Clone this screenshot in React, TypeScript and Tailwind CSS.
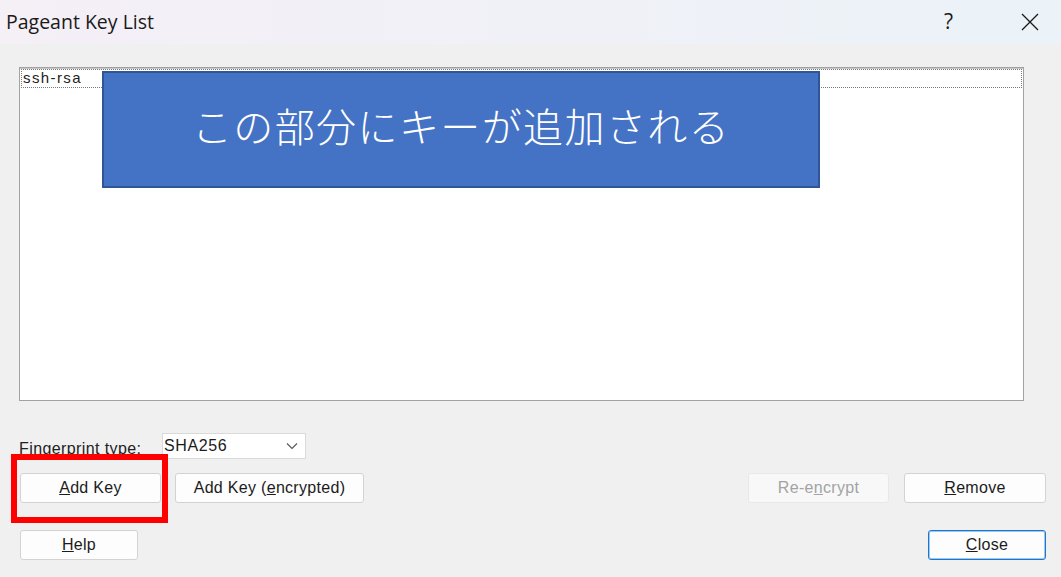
import React from "react"

const ui = { fontFamily: '"Liberation Sans", Arial, sans-serif' }

function Btn({
  children,
  className = "",
  disabled = false,
  primary = false,
}: {
  children: React.ReactNode
  className?: string
  disabled?: boolean
  primary?: boolean
}) {
  return (
    <button
      style={ui}
      className={
        "flex h-[30px] items-center justify-center rounded-[3px] border text-[16px] tracking-[0.3px] " +
        (disabled
          ? "border-[#e8e8e8] bg-[#f8f8f8] text-[#a3a3a3] "
          : primary
          ? "border-[#1a78d0] bg-[#fdfdfd] text-[#1b1b1b] shadow-[inset_0_0_0_1px_#9ec7ee] "
          : "border-[#d3d3d3] bg-[#fdfdfd] text-[#1b1b1b] ") +
        className
      }
    >
      {children}
    </button>
  )
}

export default function App() {
  return (
    <div className="relative h-[577px] w-[1061px] overflow-hidden bg-[#f0f0f0]">
      {/* Title bar */}
      <div className="flex h-[44px] items-center bg-gradient-to-r from-[#f5eff6] to-[#ebf3f8] pl-[6px]">
        <span
          className="text-[19.5px] text-[#1a1a1a]"
          style={{ fontFamily: '"Open Sans", "Noto Sans", sans-serif' }}
        >
          Pageant Key List
        </span>
        <span
          className="ml-auto mr-[68px] text-[21px] text-[#1a1a1a]"
          style={{ fontFamily: '"Open Sans", "Noto Sans", sans-serif' }}
        >
          ?
        </span>
        <svg width="18" height="18" viewBox="0 0 18 18" className="mr-[22px]">
          <path d="M1 1 L17 17 M17 1 L1 17" stroke="#1a1a1a" strokeWidth="1.3" />
        </svg>
      </div>

      <div className="px-[19px]">
        {/* Key list */}
        <div className="relative mt-[23px] h-[334px] w-[1005px] border border-[#a2a2a2] bg-white shadow-[inset_0_1px_0_#c8c8c8]">
          <div className="mx-[1px] mt-[1px] flex h-[19px] items-center border border-dotted border-[#7a7a7a]">
            <span style={ui} className="pl-[1px] text-[15px] tracking-[1.4px] text-[#222]">
              ssh-rsa
            </span>
          </div>
          <div className="absolute left-[82px] top-[3px] flex h-[117px] w-[718px] items-center justify-center border-2 border-[#2f5597] bg-[#4472c4] pb-[9px]">
            <span
              className="text-[40px] font-light tracking-[1.4px] text-white"
              style={{ fontFamily: '"Noto Sans CJK JP", "Noto Sans", sans-serif' }}
            >
              この部分にキーが追加される
            </span>
          </div>
        </div>

        {/* Fingerprint row */}
        <div className="mt-[32px] flex h-[26px] items-end">
          <span style={ui} className="w-[143px] text-[16px] leading-[20px] tracking-[0.4px] text-[#222]">
            Fingerprint type:
          </span>
          <div className="flex h-[26px] w-[144px] items-center border border-[#dadada] bg-white pl-[1px]">
            <span style={ui} className="text-[16px] tracking-[0.6px] text-[#1b1b1b]">
              SHA256
            </span>
            <svg width="12" height="8" viewBox="0 0 12 8" className="ml-auto mr-[7px]">
              <path d="M1 1.5 L6 6.5 L11 1.5" fill="none" stroke="#555" strokeWidth="1.1" />
            </svg>
          </div>
        </div>

        {/* Key buttons */}
        <div className="mt-[14px] flex items-center">
          <Btn className="ml-[1px] w-[141px]">
            <span><u>A</u>dd Key</span>
          </Btn>
          <Btn className="ml-[14px] w-[189px]">
            <span>Add Key (<u>e</u>ncrypted)</span>
          </Btn>
          <Btn disabled className="ml-auto w-[141px]">
            <span>Re-e<u>n</u>crypt</span>
          </Btn>
          <Btn className="ml-[15px] mr-[-4px] w-[142px]">
            <span><u>R</u>emove</span>
          </Btn>
        </div>

        {/* Bottom buttons */}
        <div className="mt-[27px] flex items-center">
          <Btn className="ml-[1px] w-[118px]">
            <span><u>H</u>elp</span>
          </Btn>
          <Btn primary className="ml-auto mr-[-4px] w-[118px]">
            <span><u>C</u>lose</span>
          </Btn>
        </div>
      </div>

      {/* Red annotation box */}
      <div className="absolute left-[11px] top-[454px] h-[69px] w-[157px] border-[6px] border-[#ff0000]" />
    </div>
  )
}
